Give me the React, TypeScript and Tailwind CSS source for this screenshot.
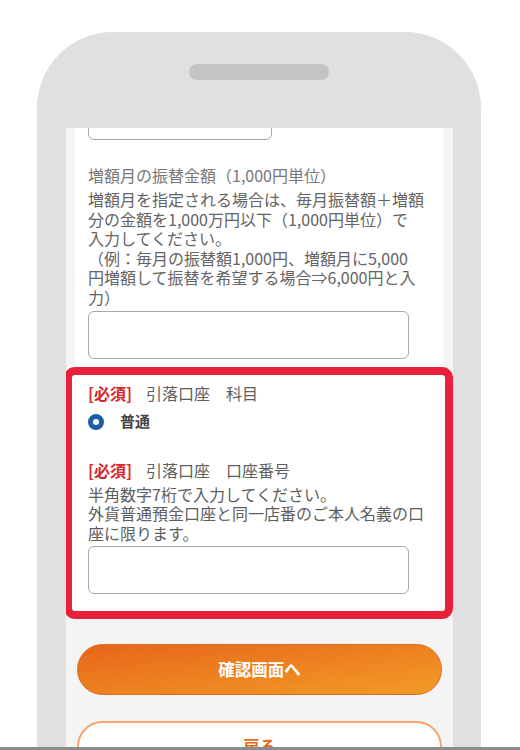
const font = { fontFamily: '"Noto Sans CJK JP", "Noto Sans", sans-serif' }

const Required = () => (
  <span className="mr-[14px] font-bold text-[#d8262f]">[必須]</span>
)

export default function App() {
  return (
    <div
      className="flex h-[750px] w-[520px] flex-col overflow-hidden bg-white"
      style={font}
    >
      <div className="flex-1 overflow-hidden pt-[32px]">
        {/* phone frame */}
        <div className="ml-[37px] h-[800px] w-[444px] rounded-t-[76px] bg-[#e0e0e0] pt-[32px]">
          <div className="mx-auto h-[16px] w-[140px] rounded-full bg-[#c4c4c4]" />

          {/* screen */}
          <div className="mt-[48px] ml-[29px] h-[700px] w-[387px] overflow-hidden bg-[#f4f4f4]">
            <div className="ml-[9px] w-[368px] bg-white pl-[13px] text-[16px] text-[#646464]">
              <div className="-mt-[36px] h-[48px] w-[184px] rounded-[6px] border border-[#a8a8a8] bg-white" />

              <div className="mt-[25px] leading-[20px] whitespace-nowrap text-[#777]">
                増額月の振替金額（1,000円単位）
              </div>
              <p className="mt-[5px] leading-[19.6px] whitespace-nowrap">
                増額月を指定される場合は、毎月振替額＋増額
                <br />
                分の金額を1,000万円以下（1,000円単位）で
                <br />
                入力してください。
                <br />
                （例：毎月の振替額1,000円、増額月に5,000
                <br />
                円増額して振替を希望する場合⇒6,000円と入
                <br />
                力）
              </p>
              <div className="mt-[3px] h-[48px] w-[321px] rounded-[6px] border border-[#a8a8a8] bg-white" />

              {/* highlighted block */}
              <div className="mt-[8px] -ml-[24px] w-[389px] rounded-[11px] border-[8px] border-[#e8203b] bg-white pt-[8px] pb-[17px] pl-[16px] text-[#5e5e5e]">
                <div className="leading-[20px] whitespace-nowrap">
                  <Required />
                  引落口座　科目
                </div>
                <div className="mt-[9px] flex h-[20px] items-center">
                  <div className="h-[16px] w-[16px] rounded-full border-[5px] border-[#1b5ea8] bg-white" />
                  <span className="ml-[16px] text-[15px] font-bold text-[#444]">
                    普通
                  </span>
                </div>

                <div className="mt-[28px] leading-[20px] whitespace-nowrap">
                  <Required />
                  引落口座　口座番号
                </div>
                <p className="mt-[5px] leading-[19.6px] whitespace-nowrap">
                  半角数字7桁で入力してください。
                  <br />
                  外貨普通預金口座と同一店番のご本人名義の口
                  <br />
                  座に限ります。
                </p>
                <div className="mt-[3px] h-[48px] w-[321px] rounded-[6px] border border-[#a8a8a8] bg-white" />
              </div>
            </div>

            {/* buttons */}
            <div className="mt-[25px] ml-[11px] flex h-[51px] w-[365px] items-center justify-center rounded-full border border-[#dc6a22] bg-linear-to-br from-[#e6651a] to-[#f39b27] text-[16.5px] font-bold text-white">
              確認画面へ
            </div>
            <div className="mt-[26px] ml-[11px] flex h-[51px] w-[365px] items-center justify-center rounded-full border-2 border-[#f5a46c] bg-white text-[16.5px] font-bold text-[#e8681c]">
              戻る
            </div>
          </div>
        </div>
      </div>
      <div className="h-[3px] shrink-0 bg-[#8c8c8c]" />
    </div>
  )
}
